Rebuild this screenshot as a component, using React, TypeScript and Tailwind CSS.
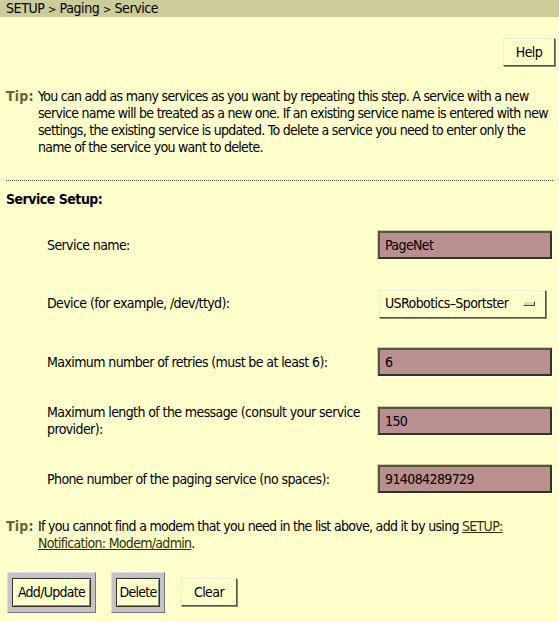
import React from "react";

const font = {
  fontFamily: '"DejaVu Sans Condensed", "Liberation Sans", Arial, sans-serif',
};

function Tip({ children }: { children: React.ReactNode }) {
  return (
    <div className="flex text-[14px] leading-[17px] text-black">
      <span className="w-[32px] shrink-0 font-bold tracking-[0.2px] text-[#666633]">Tip:</span>
      <div className="flex-1 tracking-[-0.7px]">{children}</div>
    </div>
  );
}

function Field({ value }: { value: string }) {
  return (
    <div className="border border-t-[#cccc99] border-l-[#cccc99] border-b-[#ffffee] border-r-[#ffffee]">
      <div className="h-[28px] w-[174px] border-2 border-t-[#555544] border-l-[#555544] border-b-[#333322] border-r-[#333322] bg-[#b98f8f] pl-[5px] text-[14px] leading-[24px] tracking-[-0.6px] text-black">
        {value}
      </div>
    </div>
  );
}

function Plain({ label, className = "" }: { label: string; className?: string }) {
  return (
    <div
      className={`flex items-center justify-center border border-t-[#eeeedd] border-l-[#eeeedd] border-b-[#555544] border-r-[#555544] bg-[#ffffcc] text-[14px] tracking-[-0.6px] text-black shadow-[1px_1px_0_#888877] ${className}`}
    >
      {label}
    </div>
  );
}

function DefaultBtn({ label, w }: { label: string; w: string }) {
  return (
    <div className="border border-t-[#e0e0e0] border-l-[#e0e0e0] border-b-[#777] border-r-[#777] bg-[#c4c4c4] px-[4px] py-[5px]">
      <div
        className={`flex h-[29px] items-center justify-center border border-[#333] bg-[#ffffcc] text-[14px] tracking-[-0.7px] text-black shadow-[inset_1px_1px_0_#ffffff,inset_-1px_-1px_0_#888877] ${w}`}
      >
        {label}
      </div>
    </div>
  );
}

export default function App() {
  return (
    <div className="h-[622px] w-[559px] overflow-hidden bg-[#ffffcc] text-black" style={font}>
      <div className="h-[17px] bg-[#cccc99] pl-[6px] text-[14px] leading-[17px] tracking-[-0.4px]">
        SETUP <span className="text-[11px]">&gt;</span> Paging <span className="text-[11px]">&gt;</span> Service
      </div>

      <div className="px-[6px]">
        <div className="mt-[21px] flex justify-end">
          <Plain label="Help" className="mr-[-2px] h-[28px] w-[52px]" />
        </div>

        <div className="mt-[22px]">
          <Tip>
            You can add as many services as you want by repeating this step. A service with a new service name
            will be treated as a new one. If an existing service name is entered with new settings, the existing
            service is updated. To delete a service you need to enter only the name of the service you want to
            delete.
          </Tip>
        </div>

        <div className="mt-[24px] border-t border-dotted border-[#555544]" />

        <div className="mt-[10px] text-[14px] font-bold leading-[17px] tracking-[-0.5px]">Service Setup:</div>

        <div className="mt-[8px] grid grid-cols-[1fr_auto] auto-rows-[58.5px] items-center pl-[41px] text-[14px] leading-[17px] tracking-[-0.6px]">
          <div>Service name:</div>
          <Field value="PageNet" />

          <div>Device (for example, /dev/ttyd):</div>
          <div className="ml-[2px] mr-[6px] flex h-[28px] w-[167px] items-center justify-between border border-t-[#eeeedd] border-l-[#eeeedd] border-b-[#555544] border-r-[#555544] bg-[#ffffcc] pl-[5px] pr-[10px] shadow-[1px_1px_0_#888877]">
            <span>USRobotics–Sportster</span>
            <span className="block h-[5px] w-[12px] border border-t-[#ffffff] border-l-[#ffffff] border-b-[#444] border-r-[#444] bg-[#ddddbb]" />
          </div>

          <div>Maximum number of retries (must be at least 6):</div>
          <Field value="6" />

          <div className="pr-[14px]">Maximum length of the message (consult your service provider):</div>
          <Field value="150" />

          <div>Phone number of the paging service (no spaces):</div>
          <Field value="914084289729" />
        </div>

        <div className="mt-[9px]">
          <Tip>
            If you cannot find a modem that you need in the list above, add it by using{" "}
            <span className="text-[#333300] underline">SETUP:</span>{" "}
            <span className="text-[#333300] underline">Notification: Modem/admin</span>.
          </Tip>
        </div>

        <div className="mt-[20px] flex items-center">
          <div className="ml-[1px]">
            <DefaultBtn label="Add/Update" w="w-[79px]" />
          </div>
          <div className="ml-[15px]">
            <DefaultBtn label="Delete" w="w-[44px]" />
          </div>
          <Plain label="Clear" className="ml-[16px] h-[28px] w-[56px]" />
        </div>
      </div>
    </div>
  );
}
